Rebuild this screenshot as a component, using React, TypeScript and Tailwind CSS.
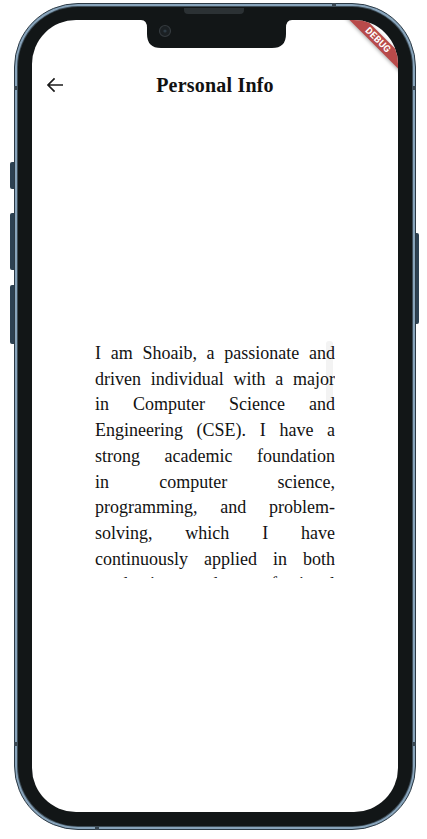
import React from 'react';

const lines = [
  'I am Shoaib, a passionate and',
  'driven individual with a major',
  'in Computer Science and',
  'Engineering (CSE). I have a',
  'strong academic foundation',
  'in computer science,',
  'programming, and problem-',
  'solving, which I have',
  'continuously applied in both',
  'academic and professional',
];

function BackArrow() {
  return (
    <svg viewBox="0 0 24 24" className="w-6 h-6" fill="none" stroke="#1c1c1c" strokeWidth="1.7">
      <path d="M20 12H5.2M11.6 5.4 5 12l6.6 6.6" />
    </svg>
  );
}

function Notch() {
  return (
    <svg
      width="151"
      height="28"
      viewBox="0 0 151 28"
      className="absolute left-[109px] top-0 z-20"
    >
      <path
        d="M0 0 Q6 0 6 8 V14 Q6 28 20 28 H131 Q145 28 145 14 V8 Q145 0 151 0 Z"
        fill="#121617"
      />
      <circle cx="24" cy="11" r="5.5" fill="#1b2023" stroke="#343a3e" strokeWidth="1.2" />
      <circle cx="24" cy="11" r="1.6" fill="#2e3b45" />
    </svg>
  );
}

function DebugBanner() {
  return (
    <div className="absolute left-[296px] top-[14px] w-[100px] h-[12px] rotate-45 bg-[#b84a4a] shadow-[0_1px_4px_rgba(0,0,0,0.35)] flex items-center justify-center z-10">
      <span className="text-white text-[9.5px] font-bold leading-none tracking-[0.2px] font-['Roboto','Liberation_Sans',sans-serif]">
        DEBUG
      </span>
    </div>
  );
}

export default function App() {
  return (
    <div className="w-[427px] h-[839px] bg-white overflow-hidden">
      <div className="relative ml-[14px] mt-[3px] w-[402px] h-[827px] rounded-[64px] bg-[#88a4bb] border border-[#2c3a45] p-[3px]">
        {/* side buttons */}
        <div className="absolute -left-[5px] top-[158px] flex flex-col gap-[24px]">
          <div className="w-[4px] h-[27px] rounded-l-[2px] bg-[#2d4152]" />
          <div className="w-[4px] h-[57px] rounded-l-[2px] bg-[#2d4152]" />
          <div className="-mt-[9px] w-[4px] h-[59px] rounded-l-[2px] bg-[#2d4152]" />
        </div>
        <div className="absolute -right-[4px] top-[229px] w-[3px] h-[91px] rounded-r-[2px] bg-[#2d4152]" />

        {/* antenna marks */}
        <div className="absolute left-[317px] -top-px w-[4px] h-[5px] bg-[#3a4853]" />
        <div className="absolute inset-x-[-1px] top-[82px] flex justify-between">
          <div className="w-[5px] h-[4px] bg-[#3a4853]" />
          <div className="w-[5px] h-[4px] bg-[#3a4853]" />
        </div>
        <div className="absolute inset-x-[-1px] top-[738px] flex justify-between">
          <div className="w-[5px] h-[4px] bg-[#3a4853]" />
          <div className="w-[5px] h-[4px] bg-[#3a4853]" />
        </div>
        <div className="absolute left-[80px] -bottom-px w-[4px] h-[5px] bg-[#3a4853]" />

        <div className="relative w-full h-full rounded-[60px] bg-[#121617] pt-[13px] px-[14px] pb-[14px] ring-1 ring-[#3e4d58]">
          {/* speaker */}
          <div className="absolute left-[166px] top-[1px] w-[60px] h-[6px] rounded-b-[4px] bg-[#2b3134]" />

          <div className="relative w-full h-full rounded-[44px] bg-white overflow-hidden flex flex-col">
            <Notch />
            <DebugBanner />

            {/* app bar */}
            <div className="h-[93px] shrink-0 pt-[37px] flex">
              <div className="w-full h-[56px] grid grid-cols-[56px_1fr_56px] items-center">
                <div className="pl-[11px] flex items-center">
                  <BackArrow />
                </div>
                <h1 className="text-center text-[20px] font-bold text-[#111] font-['Liberation_Serif',serif] tracking-[0.2px]">
                  Personal Info
                </h1>
                <div />
              </div>
            </div>

            {/* body */}
            <div className="flex-1 flex items-center justify-center pb-[6px]">
              <div className="relative w-[240px] h-[237px] overflow-hidden">
                <div className="absolute right-[2px] top-0 w-[7px] h-[62px] rounded-[3px] bg-[#f3f3f3]" />
                <div className="relative text-[18px] leading-[25.7px] text-[#121212] font-['Liberation_Serif',serif]">
                  {lines.map((line) => (
                    <div key={line} className="text-justify [text-align-last:justify] whitespace-nowrap">
                      {line}
                    </div>
                  ))}
                </div>
              </div>
            </div>
          </div>
        </div>
      </div>
    </div>
  );
}
